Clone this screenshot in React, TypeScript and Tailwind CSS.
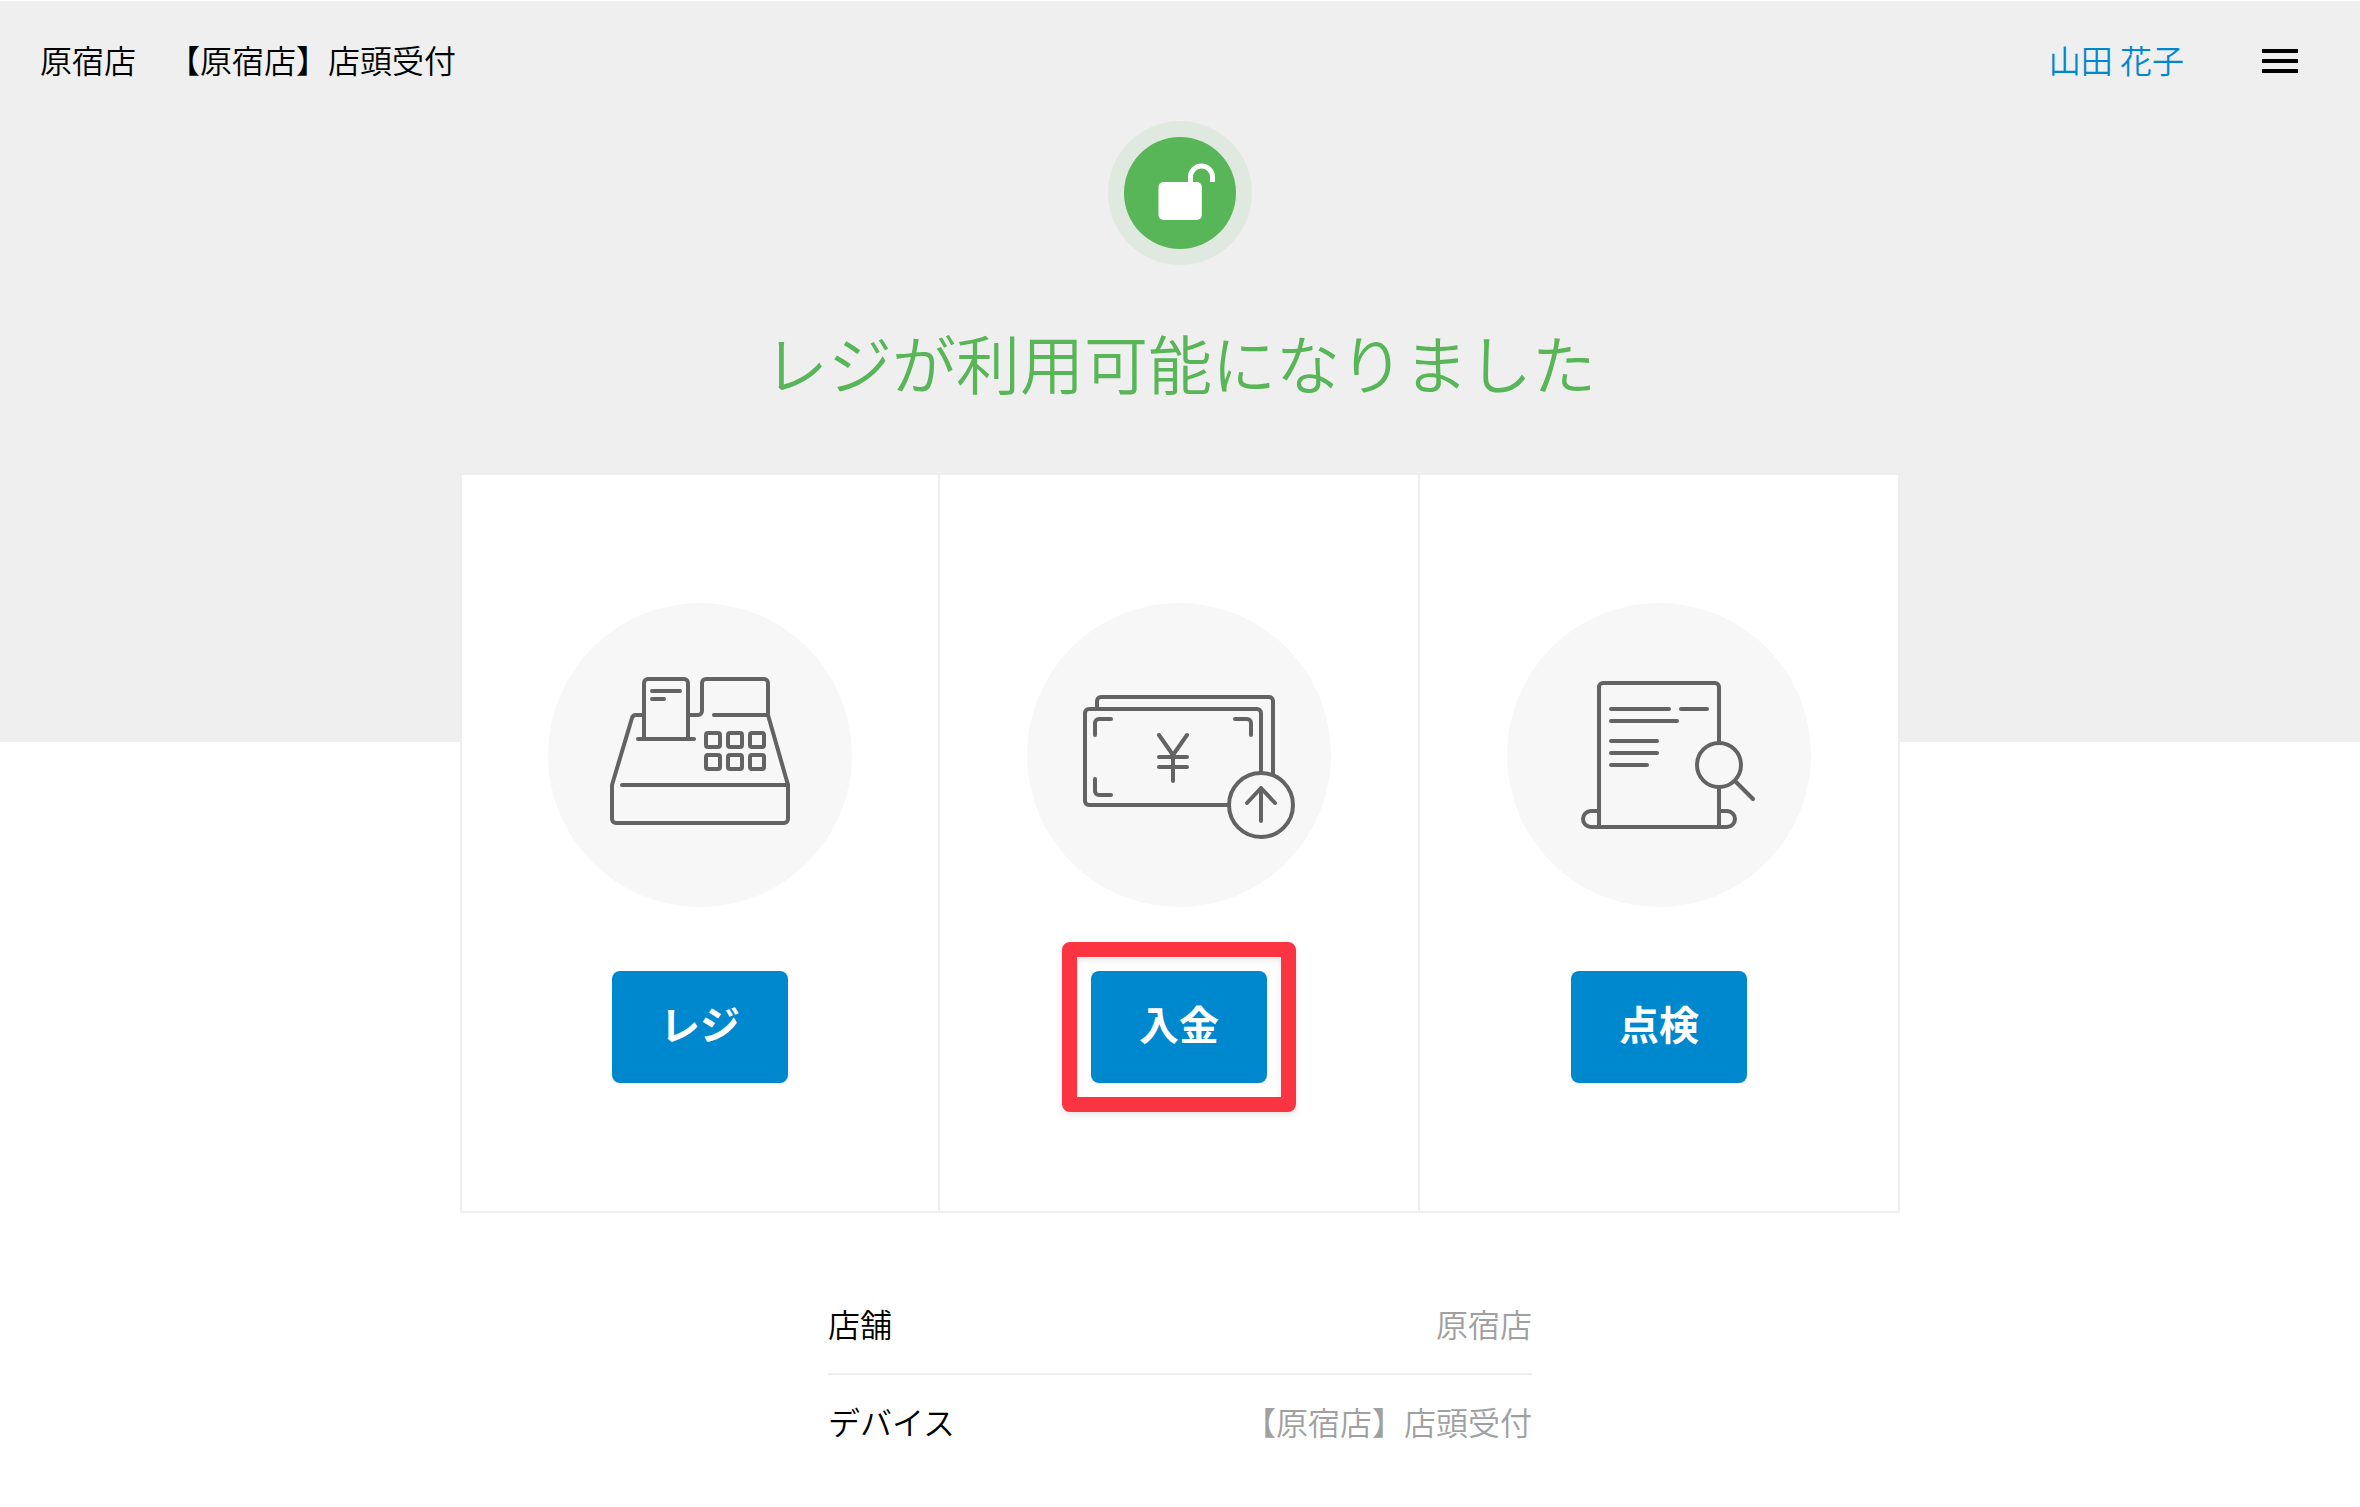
import type { ReactNode } from 'react'

interface MenuItem {
  label: string
  icon: ReactNode
  highlighted?: boolean
}

function LockOpenIcon() {
  return (
    <svg viewBox="0 0 112 112" className="size-28" fill="none" aria-hidden="true">
      <circle cx="56" cy="56" r="56" fill="#58b658" />
      <rect x="34.500" y="45" width="43.300" height="38" rx="5" fill="#fff" />
      <path d="M66.500 47V40a11 11 0 0 1 22 0v5" stroke="#fff" strokeWidth="5" />
    </svg>
  )
}

function IconCircle({ children }: { children: ReactNode }) {
  return (
    <svg
      viewBox="0 0 152 152"
      className="size-[304px]"
      fill="none"
      stroke="#636363"
      strokeWidth="2"
      strokeLinecap="round"
      strokeLinejoin="round"
      aria-hidden="true"
    >
      <circle cx="76" cy="76" r="76" fill="#f7f7f7" stroke="none" />
      {children}
    </svg>
  )
}

function RegisterIcon() {
  return (
    <IconCircle>
      <path d="M48 68V40a2 2 0 0 1 2-2h18a2 2 0 0 1 2 2v28M45 68h28" />
      <path d="M52 44h14M52 48h6" />
      <path d="M48 56h-4a2 2 0 0 0-2 1.500L32 91v17a2 2 0 0 0 2 2h84a2 2 0 0 0 2-2V91l-10-35V40a2 2 0 0 0-2-2H79a2 2 0 0 0-2 2v14a2 2 0 0 1-2 2h-5" />
      <path d="M83 56h27M37 91h83" />
      {[65, 76].map((y) =>
        [79, 90, 101].map((x) => <rect key={`${x}-${y}`} x={x} y={y} width="7" height="7" rx="1" />)
      )}
    </IconCircle>
  )
}

function DepositIcon() {
  return (
    <IconCircle>
      <path d="M35 53v-4a2 2 0 0 1 2-2h84a2 2 0 0 1 2 2v38" />
      <rect x="29" y="53" width="88" height="48" rx="2" />
      <path d="M34 66v-6a2 2 0 0 1 2-2h6M104 58h6a2 2 0 0 1 2 2v6M34 88v6a2 2 0 0 0 2 2h6" />
      <path d="M66 66l7 10 7-10M73 76v13M66 77h14M66 82h14" />
      <circle cx="117" cy="101" r="16" fill="#f7f7f7" />
      <path d="M117 109V92.500M110 100l7-7.500 7 7.500" />
    </IconCircle>
  )
}

function InspectionIcon() {
  return (
    <IconCircle>
      <path d="M46 112V42a2 2 0 0 1 2-2h56a2 2 0 0 1 2 2v70" />
      <path d="M46 104h-4a4 4 0 0 0 0 8h68a4 4 0 0 0 0-8h-4" />
      <path d="M52 53h29M87 53h13M52 59h33M52 69h23M52 75h23M52 81h18" />
      <circle cx="106" cy="81" r="11" fill="#f7f7f7" />
      <path d="M114.500 89.500l8.500 8.500" />
    </IconCircle>
  )
}

const menuItems: MenuItem[] = [
  { label: 'レジ', icon: <RegisterIcon /> },
  { label: '入金', icon: <DepositIcon />, highlighted: true },
  { label: '点検', icon: <InspectionIcon /> },
]

const details = [
  { term: '店舗', value: '原宿店' },
  { term: 'デバイス', value: '【原宿店】店頭受付' },
]

export default function App() {
  return (
    <div
      lang="ja"
      className="min-h-screen border-t border-white bg-white bg-[linear-gradient(#efefef,#efefef)] bg-[length:100%_741px] bg-no-repeat font-['Noto_Sans_CJK_JP',sans-serif] text-[32px] leading-8 font-[350] text-black"
    >
      <header className="flex h-[120px] items-center justify-between pr-14 pl-10">
        <div className="flex gap-8 pb-1">
          <span>原宿店</span>
          <span>【原宿店】店頭受付</span>
        </div>
        <div className="flex items-center gap-[72px]">
          <a href="#account" className="pb-1 text-[#0088ce]">
            山田 花子
          </a>
          <button type="button" aria-label="メニュー">
            <svg viewBox="0 0 24 24" className="size-12" fill="currentColor" aria-hidden="true">
              <path d="M3 18h18v-2H3v2zm0-5h18v-2H3v2zm0-7v2h18V6H3z" />
            </svg>
          </button>
        </div>
      </header>

      <main className="flex flex-col items-center">
        <div className="rounded-full bg-[#e0e9e0] p-4">
          <LockOpenIcon />
        </div>
        <h1 className="mt-13 mb-17 text-[64px] leading-[88px] text-[#58b658]">
          レジが利用可能になりました
        </h1>

        <ul className="grid w-full max-w-[1440px] grid-cols-3 border-y-2 border-[#eee] bg-white">
          {menuItems.map(({ label, icon, highlighted }) => (
            <li
              key={label}
              className="flex flex-col items-center gap-16 border-r-2 border-[#eee] py-32 first:border-l-2"
            >
              {icon}
              <div className="relative">
                <button
                  type="button"
                  className="h-28 rounded-lg bg-[#0088ce] px-12 pb-2 text-[40px] font-bold text-white"
                >
                  {label}
                </button>
                {/* Marker drawn around the button to press */}
                {highlighted && (
                  <div className="pointer-events-none absolute -inset-[29px] rounded-lg border-[15px] border-[#fb3441] drop-shadow-[0_3px_3px_rgba(0,0,0,0.1)]" />
                )}
              </div>
            </li>
          ))}
        </ul>

        <dl className="mt-16 w-full max-w-[704px] divide-y-2 divide-[#eee]">
          {details.map(({ term, value }) => (
            <div key={term} className="flex justify-between pt-[30px] pb-[34px]">
              <dt>{term}</dt>
              <dd className="text-[#a0a0a0]">{value}</dd>
            </div>
          ))}
        </dl>
      </main>
    </div>
  )
}
